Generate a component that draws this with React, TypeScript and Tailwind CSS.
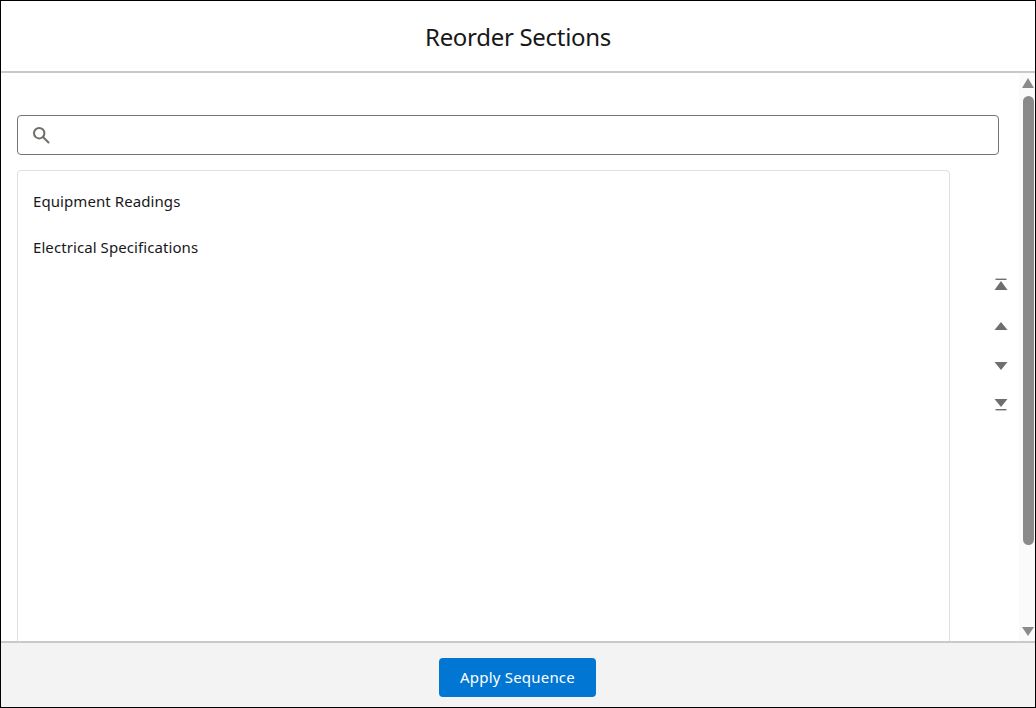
const ArrowTop = () => (
  <svg width="14" height="14" viewBox="0 0 14 14" className="block fill-[#706e6b]">
    <rect x="1.5" y="0.6" width="11" height="1.4" />
    <path d="M7 3 L13.5 12 L0.5 12 Z" />
  </svg>
);

const ArrowUp = () => (
  <svg width="14" height="14" viewBox="0 0 14 14" className="mt-[27px] block fill-[#706e6b]">
    <path d="M7 3 L13.5 11 L0.5 11 Z" />
  </svg>
);

const ArrowDown = () => (
  <svg width="14" height="14" viewBox="0 0 14 14" className="mt-[26px] block fill-[#706e6b]">
    <path d="M0.5 3 L13.5 3 L7 11 Z" />
  </svg>
);

const ArrowBottom = () => (
  <svg width="14" height="14" viewBox="0 0 14 14" className="mt-[25px] block fill-[#706e6b]">
    <path d="M0.5 1 L13.5 1 L7 9 Z" />
    <rect x="1.5" y="11" width="11" height="1.4" />
  </svg>
);

const Scrollbar = () => (
  <div className="flex w-4 shrink-0 flex-col bg-[#fafafa]">
    <svg width="12" height="10" viewBox="0 0 12 10" className="ml-[3px] mt-[5px] shrink-0 fill-[#8a8a8a]">
      <path d="M6 0 L12 10 L0 10 Z" />
    </svg>
    <div className="ml-1 mt-2 h-[449px] w-[11px] shrink-0 rounded-[6px] bg-[#8a8a8a]" />
    <div className="flex-1" />
    <svg width="12" height="9" viewBox="0 0 12 9" className="mb-[5px] ml-[3px] shrink-0 fill-[#8a8a8a]">
      <path d="M0 0 L12 0 L6 9 Z" />
    </svg>
  </div>
);

export default function App() {
  return (
    <div className="flex h-[708px] w-[1036px] flex-col overflow-hidden border border-black bg-white font-['Noto_Sans','Open_Sans',sans-serif] text-[#181818]">
      <div className="flex h-[72px] shrink-0 items-center justify-center border-b-2 border-[#c9c9c9] pt-[2px]">
        <h2 className="text-[24px] leading-[30px] tracking-[-0.3px]">Reorder Sections</h2>
      </div>

      <div className="flex min-h-0 flex-1">
        <div className="flex min-w-0 flex-1 flex-col overflow-hidden pl-4 pr-[11px] pt-[42px]">
          <div className="mr-[9px] flex h-10 shrink-0 items-center rounded border border-[#747474] bg-white pl-[14px]">
            <svg width="18" height="18" viewBox="0 0 18 18" fill="none" stroke="#706e6b" strokeWidth="2">
              <circle cx="7.2" cy="7.2" r="5.2" />
              <path d="M11 11 L16.5 16.5" strokeLinecap="round" />
            </svg>
          </div>

          <div className="mt-[15px] flex flex-1 gap-[44px]">
            <div className="h-[600px] flex-1 rounded border border-[#dfdfdf] py-[7px] text-[15px] tracking-[0.08px]">
              <div className="flex h-[46px] items-center px-[15px]">Equipment Readings</div>
              <div className="flex h-[46px] items-center px-[15px]">Electrical Specifications</div>
            </div>
            <div className="flex w-[14px] shrink-0 flex-col pt-[108px]">
              <ArrowTop />
              <ArrowUp />
              <ArrowDown />
              <ArrowBottom />
            </div>
          </div>
        </div>
        <Scrollbar />
      </div>

      <div className="flex h-[66px] shrink-0 items-center justify-center border-t-2 border-[#c9c9c9] bg-[#f3f3f3] pr-px pt-[5px]">
        <button className="h-[39px] w-[157px] rounded bg-[#0176d3] text-[15px] tracking-[0.2px] text-white">
          Apply Sequence
        </button>
      </div>
    </div>
  );
}
